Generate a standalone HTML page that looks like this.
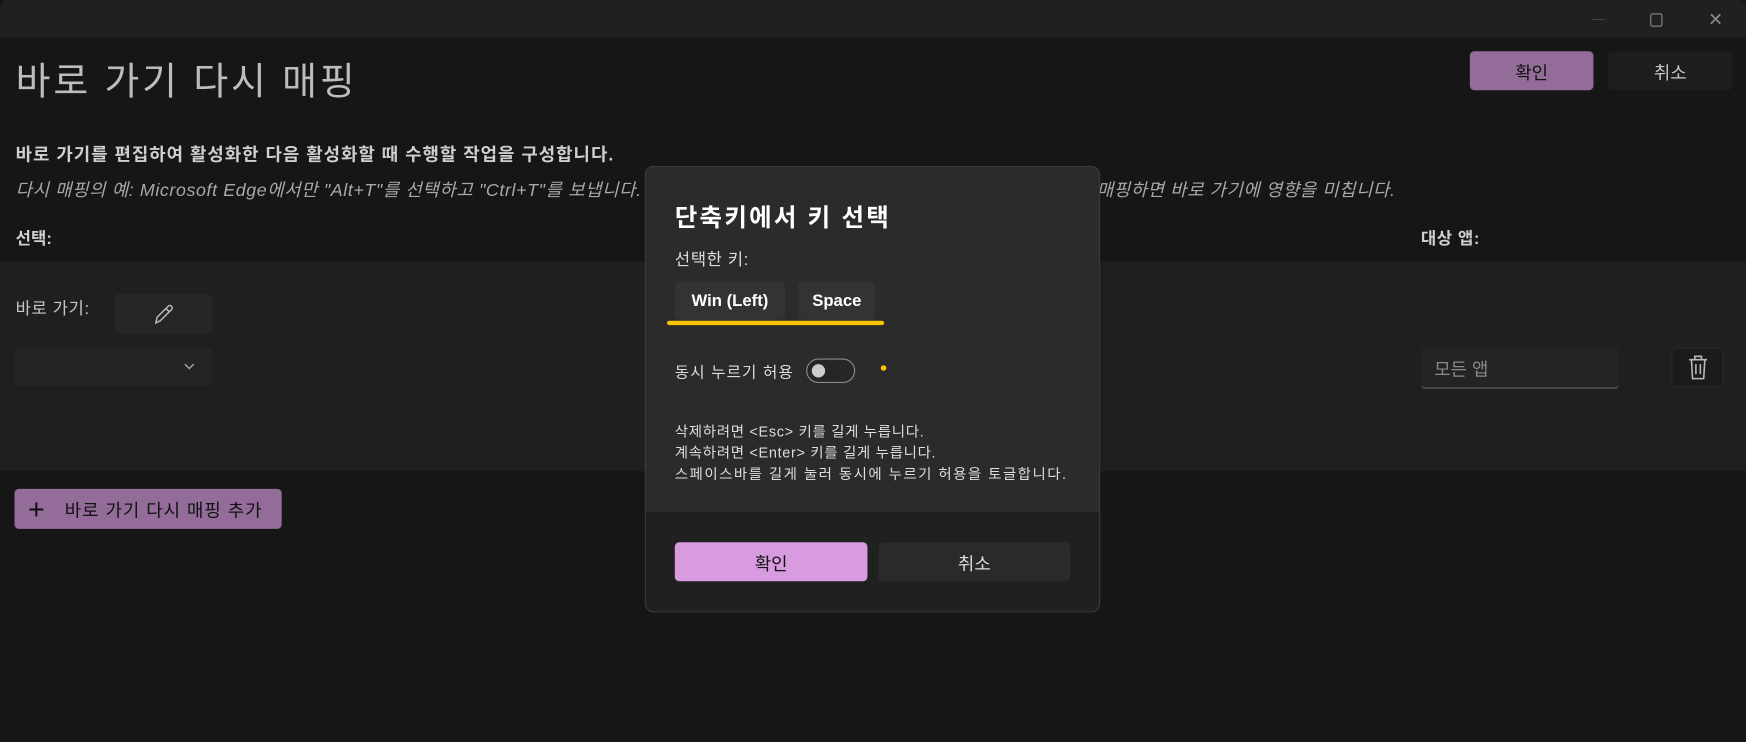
<!DOCTYPE html>
<html><head><meta charset="utf-8"><style>
html,body{margin:0;padding:0;background:#161616;width:1746px;height:742px;overflow:hidden}
#w{position:absolute;left:0;top:0;width:1568px;height:666px;transform:scale(1.11352);transform-origin:0 0;font-family:"Liberation Sans","Noto Sans CJK KR",sans-serif;color:#c8c8c8}
.a{position:absolute;white-space:nowrap}
.btn{position:absolute;border-radius:4px;display:flex;align-items:center;justify-content:center;font-size:16px}
</style></head><body><div id="w">
<div class="a" style="left:0;top:0;width:1568px;height:34px;background:#202020;border-radius:8px 8px 0 0"></div>
<div class="a" style="left:1430px;top:17px;width:11px;height:1px;background:#444"></div>
<div class="a" style="left:1482px;top:12px;width:9px;height:10px;border:1px solid #8a8a8a;border-radius:2px"></div>
<div class="a" style="left:1534px;top:8px;font-size:16px;color:#8a8a8a">✕</div>
<div class="a" style="left:0;top:235px;width:1568px;height:188px;background:#1f1f1f"></div>
<div class="a" style="left:14px;top:46px;font-size:34px;color:#bdbdbd;letter-spacing:2.6px">바로 가기 다시 매핑</div>
<div class="btn" style="left:1320px;top:46px;width:111px;height:35px;background:#936c9a;color:#111">확인</div>
<div class="btn" style="left:1444px;top:46px;width:112px;height:35px;background:#1d1d1d;color:#c8c8c8">취소</div>
<div class="a" style="left:14px;top:125px;font-size:16px;font-weight:bold;color:#cfcfcf;letter-spacing:0.9px">바로 가기를 편집하여 활성화한 다음 활성화할 때 수행할 작업을 구성합니다.</div>
<div class="a" style="left:14px;top:157px;font-size:16px;font-style:italic;color:#a8a8a8;letter-spacing:0.55px">다시 매핑의 예: Microsoft Edge에서만 "Alt+T"를 선택하고 "Ctrl+T"를 보냅니다.</div>
<div class="a" style="left:985px;top:157px;font-size:16px;font-style:italic;color:#a8a8a8;letter-spacing:0.5px">매핑하면 바로 가기에 영향을 미칩니다.</div>
<div class="a" style="left:14px;top:203px;font-size:15px;font-weight:bold;color:#cfcfcf">선택:</div>
<div class="a" style="left:1276px;top:203px;font-size:15px;font-weight:bold;color:#cfcfcf;letter-spacing:0.5px">대상 앱:</div>
<div class="a" style="left:14px;top:266px;font-size:15px;color:#c8c8c8;letter-spacing:0.5px">바로 가기:</div>
<div class="btn" style="left:103px;top:264px;width:88px;height:36px;background:#262626">
<svg width="22" height="22" viewBox="0 0 22 22"><path d="M4 19l1-5L15 4a2 2 0 0 1 3 3L8 17z M13 6l3 3" fill="none" stroke="#bbb" stroke-width="1.3"/></svg></div>
<div class="btn" style="left:13px;top:312px;width:178px;height:35px;background:#242424"><svg style="position:absolute;left:152px;top:14px" width="10" height="7"><path d="M1 1l4 4 4-4" fill="none" stroke="#aaa" stroke-width="1.2"/></svg></div>
<div class="a" style="left:1276px;top:312px;width:178px;height:36px;background:#242424;border-bottom:1px solid #6a6a6a;border-radius:4px"><span style="position:absolute;left:12px;top:6px;font-size:16px;color:#8a8a8a">모든 앱</span></div>
<div class="btn" style="left:1501px;top:312px;width:47px;height:36px;background:#1b1b1b;border:1px solid #2a2a2a;box-sizing:border-box">
<svg width="22" height="24" viewBox="0 0 22 24"><path d="M3 5h16 M8 5V2h6v3 M5 5l1 17h10l1-17 M9 9v9 M13 9v9" fill="none" stroke="#bbb" stroke-width="1.4"/></svg></div>
<div class="btn" style="left:13px;top:439px;width:240px;height:36px;background:#936c9a;color:#111;justify-content:flex-start">
<span style="font-size:26px;margin-left:12px;font-weight:300;line-height:1">+</span><span style="margin-left:18px;font-size:16px;letter-spacing:0.9px">바로 가기 다시 매핑 추가</span></div>

<div class="a" style="left:579px;top:149px;width:409px;height:401px;background:#2b2b2b;border:1px solid #3a3a3a;border-radius:8px;overflow:hidden;box-sizing:border-box">
<div class="a" style="left:0;top:310px;width:409px;height:91px;background:#202020;border-top:1px solid #1c1c1c"></div>
</div>
<div class="a" style="left:606px;top:178px;font-size:22px;font-weight:bold;color:#fff;letter-spacing:2px">단축키에서 키 선택</div>
<div class="a" style="left:606px;top:222px;font-size:15px;color:#ddd;letter-spacing:0.5px">선택한 키:</div>
<div class="btn" style="left:606px;top:253px;width:99px;height:34px;background:#333;color:#fff;font-weight:bold;font-size:15px">Win (Left)</div>
<div class="btn" style="left:717px;top:253px;width:69px;height:34px;background:#333;color:#fff;font-weight:bold;font-size:15px">Space</div>
<div class="a" style="left:599px;top:288px;width:195px;height:4px;background:#f8c400;border-radius:2px"></div>
<div class="a" style="left:606px;top:324px;font-size:14px;color:#ddd;letter-spacing:1px">동시 누르기 허용</div>
<div class="a" style="left:724px;top:322px;width:44px;height:22px;border:1px solid #8a8a8a;border-radius:11px;box-sizing:border-box;background:#262626"><div style="position:absolute;left:4px;top:4px;width:12px;height:12px;border-radius:6px;background:#ccc"></div></div>
<div class="a" style="left:791px;top:328px;width:5px;height:5px;border-radius:3px;background:#f8c400"></div>
<div class="a" style="left:606px;top:378px;font-size:13px;line-height:19px;color:#ddd;letter-spacing:0.6px"><span>삭제하려면 &lt;Esc&gt; 키를 길게 누릅니다.</span><br>계속하려면 &lt;Enter&gt; 키를 길게 누릅니다.<br><span style="letter-spacing:1.3px">스페이스바를 길게 눌러 동시에 누르기 허용을 토글합니다.</span></div>
<div class="btn" style="left:606px;top:487px;width:173px;height:35px;background:#d99be0;color:#111">확인</div>
<div class="btn" style="left:789px;top:487px;width:172px;height:35px;background:#2a2a2a;color:#ddd">취소</div>
</div></body></html>
